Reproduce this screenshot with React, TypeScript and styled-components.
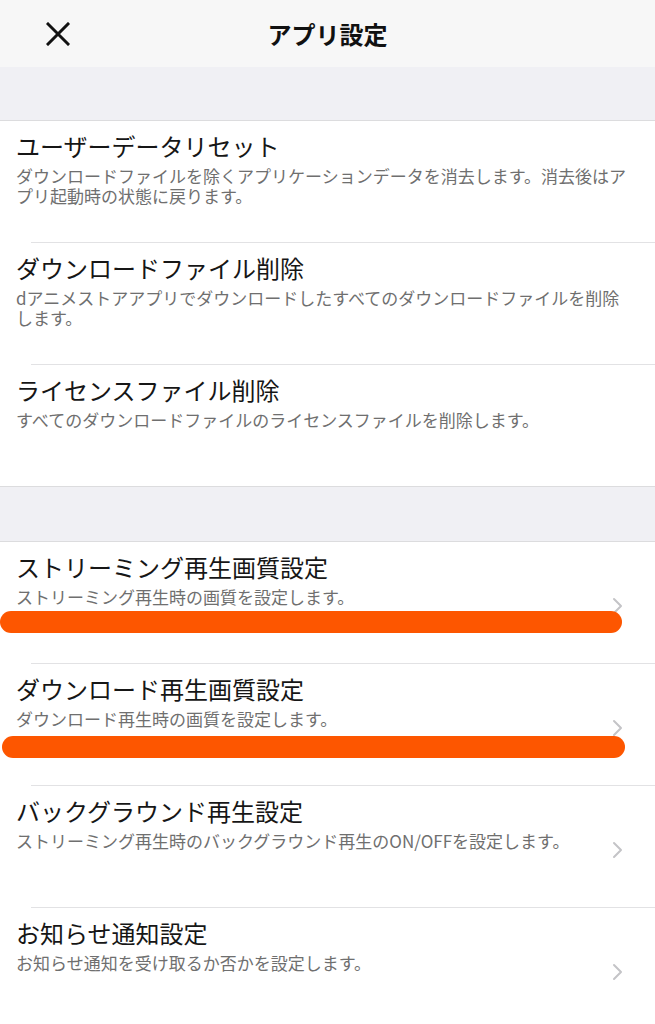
import React from 'react';
import styled, { createGlobalStyle } from 'styled-components';

interface SettingItem {
  title: string;
  description: string;
  chevron?: boolean;
  mark?: { left: number; top: number; width: number; height: number };
}

const GlobalStyle = createGlobalStyle`
  html, body {
    margin: 0;
    padding: 0;
    background: #ffffff;
  }
  body {
    font-family: 'Noto Sans CJK JP', 'Noto Sans', sans-serif;
    -webkit-font-smoothing: antialiased;
  }
`;

const Page = styled.div`
  width: 655px;
  height: 1024px;
  overflow: hidden;
  background: #ffffff;
`;

const Header = styled.header`
  height: 67px;
  display: grid;
  grid-template-columns: 1fr auto 1fr;
  align-items: center;
  background: #f7f7f7;
`;

const CloseButton = styled.button`
  justify-self: start;
  margin-left: 44px;
  padding: 0;
  width: 28px;
  height: 28px;
  border: none;
  background: none;
  display: flex;
  align-items: center;
  justify-content: center;
`;

const HeaderTitle = styled.h1`
  margin: 0;
  font-size: 24px;
  line-height: 34px;
  font-weight: 700;
  color: #111111;
`;

const SectionGap = styled.div<{ $height: number; $topLine?: boolean }>`
  height: ${p => p.$height}px;
  background: #f0f0f4;
  border-bottom: 1px solid #dcdcde;
  border-top: ${p => (p.$topLine ? '1px solid #dcdcde' : 'none')};
`;

const Group = styled.div`
  display: flex;
  flex-direction: column;
`;

const Row = styled.div<{ $first: boolean }>`
  position: relative;
  height: 121px;
  display: flex;
  border-top: ${p => (p.$first ? 'none' : '1px solid transparent')};

  &::before {
    content: '';
    display: ${p => (p.$first ? 'none' : 'block')};
    position: absolute;
    top: -1px;
    left: 31px;
    right: 0;
    height: 1px;
    background: #e2e2e4;
  }
`;

const RowText = styled.div`
  flex: 1;
  min-width: 0;
  padding: 10px 20px 0 16px;
`;

const RowTitle = styled.div`
  font-size: 24px;
  line-height: 30px;
  color: #161616;
`;

const RowDescription = styled.div`
  margin-top: 5px;
  font-size: 17px;
  line-height: 20px;
  color: #6f6f6f;
`;

const ChevronCell = styled.div`
  align-self: center;
  display: flex;
  margin: 6px 32px 0 0;
`;

const Marker = styled.div`
  position: absolute;
  background: #fd5600;
  border-radius: 12px;
`;

const firstGroup: SettingItem[] = [
  {
    title: 'ユーザーデータリセット',
    description:
      'ダウンロードファイルを除くアプリケーションデータを消去します。消去後はアプリ起動時の状態に戻ります。',
  },
  {
    title: 'ダウンロードファイル削除',
    description:
      'dアニメストアアプリでダウンロードしたすべてのダウンロードファイルを削除します。',
  },
  {
    title: 'ライセンスファイル削除',
    description: 'すべてのダウンロードファイルのライセンスファイルを削除します。',
  },
];

const secondGroup: SettingItem[] = [
  {
    title: 'ストリーミング再生画質設定',
    description: 'ストリーミング再生時の画質を設定します。',
    chevron: true,
    mark: { left: 0, top: 69, width: 622, height: 22 },
  },
  {
    title: 'ダウンロード再生画質設定',
    description: 'ダウンロード再生時の画質を設定します。',
    chevron: true,
    mark: { left: 2, top: 72, width: 623, height: 22 },
  },
  {
    title: 'バックグラウンド再生設定',
    description: 'ストリーミング再生時のバックグラウンド再生のON/OFFを設定します。',
    chevron: true,
  },
  {
    title: 'お知らせ通知設定',
    description: 'お知らせ通知を受け取るか否かを設定します。',
    chevron: true,
  },
];

const CloseIcon = () => (
  <svg width="24" height="24" viewBox="0 0 24 24">
    <path d="M2 2 L22 22 M22 2 L2 22" stroke="#111" strokeWidth="3" strokeLinecap="square" fill="none" />
  </svg>
);

const Chevron = () => (
  <svg width="11" height="18" viewBox="0 0 11 18">
    <path d="M2 2 L9 9 L2 16" stroke="#c4c4c7" strokeWidth="2" fill="none" strokeLinecap="round" strokeLinejoin="round" />
  </svg>
);

const SettingsGroup: React.FC<{ items: SettingItem[] }> = ({ items }) => (
  <Group>
    {items.map((item, i) => (
      <Row key={item.title} $first={i === 0}>
        <RowText>
          <RowTitle>{item.title}</RowTitle>
          <RowDescription>{item.description}</RowDescription>
        </RowText>
        {item.chevron && (
          <ChevronCell>
            <Chevron />
          </ChevronCell>
        )}
        {item.mark && (
          <Marker
            style={{
              left: item.mark.left,
              top: item.mark.top,
              width: item.mark.width,
              height: item.mark.height,
            }}
          />
        )}
      </Row>
    ))}
  </Group>
);

const App: React.FC = () => {
  return (
    <>
      <GlobalStyle />
      <Page>
        <Header>
          <CloseButton aria-label="閉じる">
            <CloseIcon />
          </CloseButton>
          <HeaderTitle>アプリ設定</HeaderTitle>
          <span />
        </Header>
        <SectionGap $height={53} />
        <SettingsGroup items={firstGroup} />
        <SectionGap $height={54} $topLine />
        <SettingsGroup items={secondGroup} />
      </Page>
    </>
  );
};

export default App;
